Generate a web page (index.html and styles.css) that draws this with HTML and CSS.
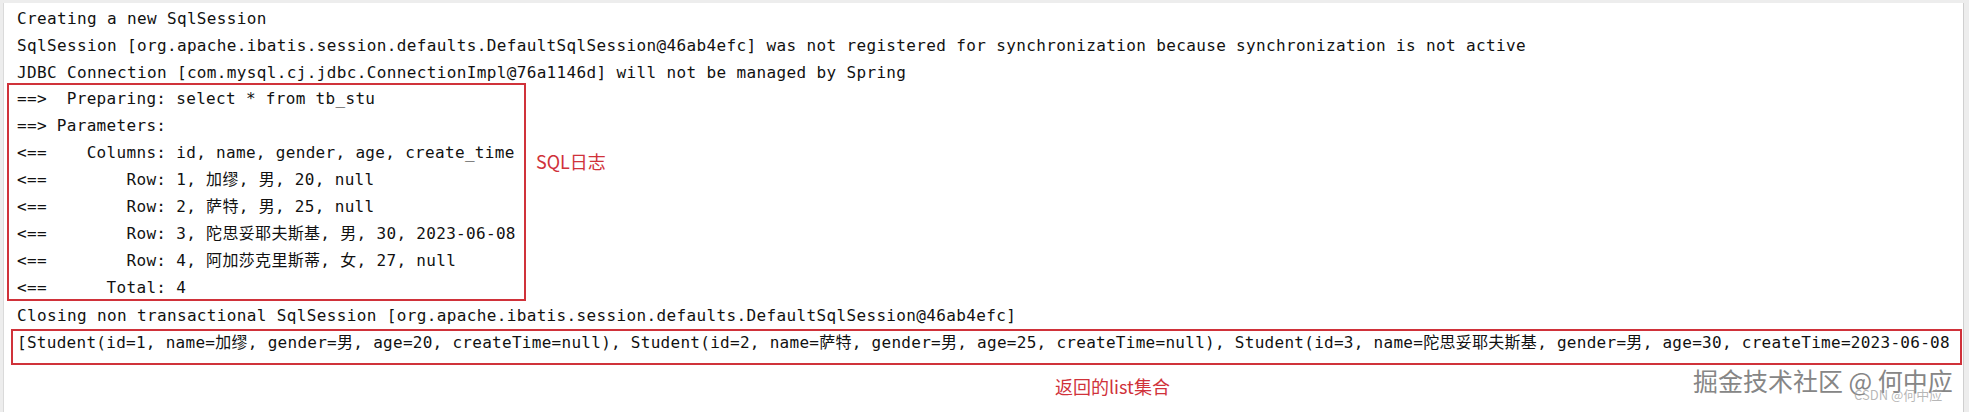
FILE: index.html
```html
<!DOCTYPE html>
<html lang="zh-CN">
<head>
<meta charset="utf-8">
<title>SQL log</title>
<link rel="stylesheet" href="styles.css">
</head>
<body>
<div class="panel">
  <div class="console">
    <div class="line">Creating a new SqlSession</div>
    <div class="line">SqlSession [org.apache.ibatis.session.defaults.DefaultSqlSession@46ab4efc] was not registered for synchronization because synchronization is not active</div>
    <div class="line">JDBC Connection [com.mysql.cj.jdbc.ConnectionImpl@76a1146d] will not be managed by Spring</div>
    <div class="sql-box">
      <div class="line">==&gt;  Preparing: select * from tb_stu</div>
      <div class="line">==&gt; Parameters: </div>
      <div class="line">&lt;==    Columns: id, name, gender, age, create_time</div>
      <div class="line">&lt;==        Row: 1, 加缪, 男, 20, null</div>
      <div class="line">&lt;==        Row: 2, 萨特, 男, 25, null</div>
      <div class="line">&lt;==        Row: 3, 陀思妥耶夫斯基, 男, 30, 2023-06-08</div>
      <div class="line">&lt;==        Row: 4, 阿加莎克里斯蒂, 女, 27, null</div>
      <div class="line last">&lt;==      Total: 4</div>
    </div>
    <div class="line">Closing non transactional SqlSession [org.apache.ibatis.session.defaults.DefaultSqlSession@46ab4efc]</div>
    <div class="list-box">
      <div class="line">[Student(id=1, name=加缪, gender=男, age=20, createTime=null), Student(id=2, name=萨特, gender=男, age=25, createTime=null), Student(id=3, name=陀思妥耶夫斯基, gender=男, age=30, createTime=2023-06-08</div>
    </div>
  </div>
  <div class="note note-sql">SQL日志</div>
  <div class="note note-list">返回的list集合</div>
  <div class="watermark">掘金技术社区 @ 何中应</div>
  <div class="watermark-small">CSDN @何中应</div>
</div>
</body>
</html>
```

FILE: styles.css
```css
html, body {
  margin: 0;
  padding: 0;
}

body {
  width: 1969px;
  height: 412px;
  background: #ededed;
  overflow: hidden;
}

.panel {
  position: relative;
  box-sizing: border-box;
  margin: 3px 5px 0 3px;
  height: 409px;
  background: #ffffff;
  border-left: 1px solid #dadada;
  border-right: 1px solid #cfcfcf;
  overflow: hidden;
}

.console {
  padding: 2px 0 0 3px;
  font-family: "DejaVu Sans Mono", "Noto Sans CJK SC", monospace;
  font-size: 16px;
  letter-spacing: 0.36px;
  color: #111111;
}

.line {
  height: 27px;
  line-height: 27px;
  padding-left: 10px;
  white-space: pre;
}

.sql-box {
  box-sizing: border-box;
  width: 519px;
  margin-top: -3px;
  margin-bottom: 1px;
  border: 2px solid #d0323a;
}

.sql-box .line {
  padding-left: 8px;
  letter-spacing: 0.32px;
}

.sql-box .line.last {
  margin-bottom: -2px;
}

.list-box {
  margin: 0 1px 0 4px;
  height: 36px;
  box-sizing: border-box;
  border: 2px solid #d0323a;
  overflow: hidden;
}

.list-box .line {
  padding-left: 4px;
  height: 23px;
  line-height: 23px;
  letter-spacing: 0.28px;
}

.note {
  position: absolute;
  font-family: "Noto Sans CJK SC", sans-serif;
  font-size: 18px;
  line-height: 20px;
  color: #d0323a;
  white-space: nowrap;
}

.note-sql {
  left: 532px;
  top: 148px;
}

.note-list {
  left: 1051px;
  top: 373px;
}

.watermark {
  position: absolute;
  left: 1689px;
  top: 362px;
  font-family: "Noto Sans CJK SC", sans-serif;
  font-size: 25px;
  line-height: 30px;
  color: #868686;
  white-space: nowrap;
  text-shadow: 0 0 1px #ffffff;
}

.watermark-small {
  position: absolute;
  left: 1850px;
  top: 384px;
  font-family: "Noto Sans CJK SC", sans-serif;
  font-size: 13px;
  line-height: 16px;
  color: rgba(160, 160, 160, 0.75);
  white-space: nowrap;
}
```
